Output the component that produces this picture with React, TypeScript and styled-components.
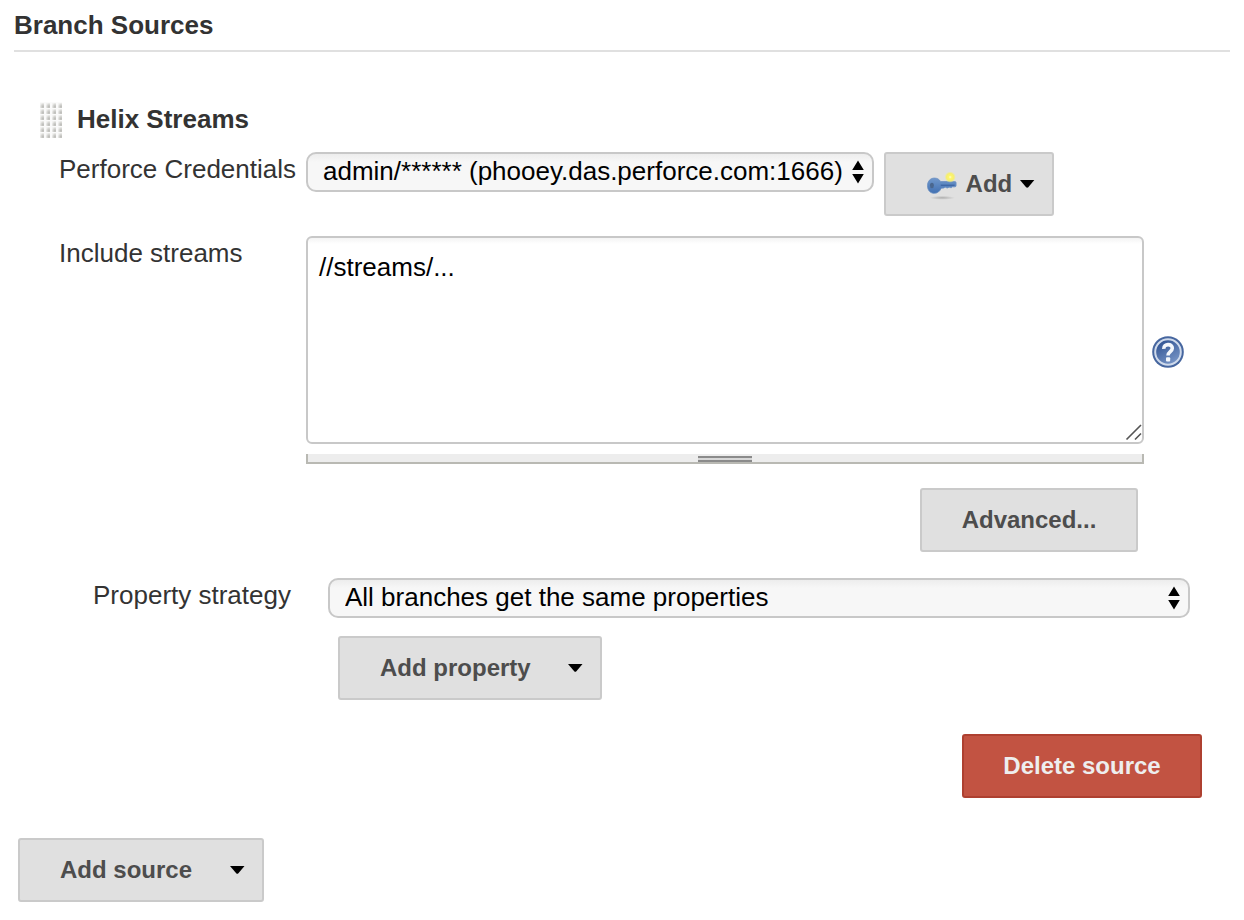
import React from "react";
import styled, { createGlobalStyle } from "styled-components";

const GlobalStyle = createGlobalStyle`
  *, *::before, *::after { box-sizing: border-box; }
  body {
    margin: 0;
    background: #fff;
    color: #333;
    font: 26px/30px "Liberation Sans", Arial, Helvetica, sans-serif;
  }
`;

const Page = styled.main`
  padding: 10px 14px 18px;
`;

const SectionTitle = styled.h1`
  margin: 0;
  padding-bottom: 10px;
  border-bottom: 2px solid #e0e0e0;
  font-size: 26px;
  line-height: 30px;
  font-weight: 700;
`;

const Source = styled.section`
  padding: 50px 28px 0 26px;
`;

const SourceHeader = styled.header`
  display: flex;
  gap: 15px;
  height: 36px;
`;

const SourceTitle = styled.h2`
  margin: 0;
  font-size: 26px;
  line-height: 34px;
  font-weight: 700;
`;

const Row = styled.div<{ $top: number; $left?: number; $right?: number }>`
  display: flex;
  align-items: flex-start;
  margin-top: ${(p) => p.$top}px;
  padding-left: ${(p) => p.$left ?? 0}px;
  padding-right: ${(p) => p.$right ?? 0}px;
`;

const ActionRow = styled(Row)`
  justify-content: flex-end;
`;

const Label = styled.label<{ $width: number }>`
  flex: 0 0 ${(p) => p.$width}px;
  padding-top: 2px;
  white-space: nowrap;
`;

const SelectBox = styled.span<{ $width?: number }>`
  position: relative;
  display: flex;
  flex: ${(p) => (p.$width ? `0 0 ${p.$width}px` : "1")};
`;

const Select = styled.select`
  appearance: none;
  width: 100%;
  height: 40px;
  margin: 0;
  padding: 0 30px 2px 15px;
  border: 2px solid #c8c8c8;
  border-radius: 10px;
  background: linear-gradient(#ededed, #f7f7f7 8px);
  color: #000;
  font: inherit;
`;

const SelectArrows = styled.svg`
  position: absolute;
  top: 8px;
  right: 10px;
  pointer-events: none;
`;

const Button = styled.button<{ $width: number; $danger?: boolean }>`
  display: flex;
  align-items: center;
  justify-content: center;
  width: ${(p) => p.$width}px;
  height: 64px;
  margin: 0;
  padding: 0;
  border: 2px solid ${(p) => (p.$danger ? "#ae4030" : "#cacaca")};
  border-radius: 3px;
  background: ${(p) => (p.$danger ? "#c25342" : "#e0e0e0")};
  color: ${(p) => (p.$danger ? "#eee" : "#4d4d4d")};
  font: inherit;
  font-size: 24px;
  font-weight: 700;
  white-space: nowrap;
`;

const MenuButton = styled(Button)`
  justify-content: space-between;
  padding: 0 17px 0 40px;
`;

const CredentialButton = styled(MenuButton)`
  justify-content: flex-start;
  gap: 8px;
  margin-left: 10px;
`;

const StreamsField = styled.div`
  position: relative;
  flex: 1;
`;

const TextArea = styled.textarea`
  display: block;
  width: 100%;
  height: 208px;
  margin: 0;
  padding: 14px 11px;
  border: 2px solid #c8c8c8;
  border-radius: 6px;
  background: linear-gradient(#f4f4f4, #fff 6px);
  color: #000;
  font: inherit;
  resize: none;
`;

const Corner = styled.svg`
  position: absolute;
  top: 187px;
  right: 0;
  pointer-events: none;
`;

const ResizeBar = styled.div`
  display: flex;
  justify-content: center;
  height: 10px;
  margin-top: 10px;
  padding-top: 2px;
  border: solid #b9b9b3;
  border-width: 0 2px 2px;
  background: #ededed;
`;

const ResizeGrip = styled.span`
  width: 54px;
  height: 6px;
  border: solid #8b8b8b;
  border-width: 2px 0;
  background: #d8d8d8;
`;

const HelpLink = styled.a`
  flex: none;
  align-self: center;
  display: flex;
  height: 32px;
  margin-left: 8px;
`;

const StreamsRow = styled(Row)`
  min-height: 232px;
`;

const Footer = styled.footer`
  margin-top: 40px;
  padding-left: 4px;
`;

const Caret = () => (
  <svg width="15" height="8" viewBox="0 0 15 8" aria-hidden="true">
    <path d="M0 0h14.500L8.400 7.300q-1.100 1-2.200 0z" fill="#000" />
  </svg>
);

const Arrows = () => (
  <SelectArrows width="12" height="24" viewBox="0 0 12 24" aria-hidden="true">
    <path d="M6 .5l5.800 9.500H.2zM.2 14h11.600L6 23.500z" fill="#000" />
  </SelectArrows>
);

const DragHandle = () => (
  <svg width="22" height="36" viewBox="0 0 22 36" aria-hidden="true">
    <defs>
      <radialGradient id="dot" cx=".75" cy=".75" r=".8">
        <stop offset="0" stopColor="#b8b8b4" />
        <stop offset=".5" stopColor="#d2d2cf" />
        <stop offset="1" stopColor="#f3f3f2" />
      </radialGradient>
      <pattern id="dots" width="6" height="6" patternUnits="userSpaceOnUse">
        <rect width="6" height="6" fill="#fafafa" />
        <rect y="1" width="4" height="5" fill="url(#dot)" />
      </pattern>
    </defs>
    <rect width="22" height="36" fill="url(#dots)" />
  </svg>
);

const KeyIcon = () => (
  <svg width="32" height="32" viewBox="0 0 32 32" aria-hidden="true">
    <defs>
      <radialGradient id="glow">
        <stop offset="0" stopColor="#fffccc" />
        <stop offset=".3" stopColor="#fdf56a" />
        <stop offset=".65" stopColor="#f5ee72" />
        <stop offset="1" stopColor="#f3ed8a" stopOpacity="0" />
      </radialGradient>
      <radialGradient id="shade">
        <stop offset="0" stopColor="#999" stopOpacity=".7" />
        <stop offset="1" stopColor="#999" stopOpacity="0" />
      </radialGradient>
      <linearGradient id="metal" x2="0" y2="1">
        <stop offset="0" stopColor="#7198cb" />
        <stop offset="1" stopColor="#4170b2" />
      </linearGradient>
    </defs>
    <ellipse cx="16.500" cy="30" rx="13" ry="2" fill="url(#shade)" />
    <path
      d="M8.500 10c3 0 5 1.200 6.200 3.500H29q1.500 0 1.500 1.200v3q0 1.200-1.500 1.200h-2.200l-1.300 1-2-.7-2 .9-2-.9-1.500.9-2.500.2C14 23.500 11.500 25.500 8.500 25.500 4.500 25.500 1.500 22.500 1.500 17.800S4.500 10 8.500 10z"
      fill="url(#metal)"
      stroke="#6a8fc2"
      strokeWidth=".8"
    />
    <ellipse cx="6" cy="17.500" rx="2" ry="2.800" fill="#4a678f" />
    <path d="M15 17.300h14" stroke="#3f68a6" strokeWidth="1.400" />
    <circle cx="24.500" cy="9" r="5.800" fill="url(#glow)" />
  </svg>
);

const HelpIcon = () => (
  <svg width="32" height="32" viewBox="0 0 32 32" aria-hidden="true">
    <defs>
      <linearGradient id="help" x1=".2" y1="0" x2=".8" y2="1">
        <stop offset="0" stopColor="#2d5090" />
        <stop offset="1" stopColor="#7d9aca" />
      </linearGradient>
    </defs>
    <circle cx="16" cy="16" r="15.800" fill="#46669f" />
    <circle cx="16" cy="16" r="12.800" fill="url(#help)" stroke="#cfdaeb" strokeWidth="2" />
    <path
      d="M11.800 12.800C11.500 7.300 20.500 7.300 20.300 12.300c0 3.200-4.300 3.400-4.300 7.200"
      fill="none"
      stroke="#f4f7fb"
      strokeWidth="3.600"
    />
    <rect x="14" y="21.300" width="4.200" height="4.200" rx="1" fill="#f4f7fb" />
  </svg>
);

export default function App() {
  return (
    <>
      <GlobalStyle />
      <Page>
        <SectionTitle>Branch Sources</SectionTitle>
        <Source>
          <SourceHeader>
            <DragHandle />
            <SourceTitle>Helix Streams</SourceTitle>
          </SourceHeader>

          <Row $top={14} $left={19}>
            <Label $width={247} htmlFor="credentials">Perforce Credentials</Label>
            <SelectBox $width={568}>
              <Select id="credentials">
                <option>admin/****** (phooey.das.perforce.com:1666)</option>
              </Select>
              <Arrows />
            </SelectBox>
            <CredentialButton type="button" $width={170}>
              <KeyIcon />
              Add
              <Caret />
            </CredentialButton>
          </Row>

          <StreamsRow $top={20} $left={19} $right={18}>
            <Label $width={247} htmlFor="streams">Include streams</Label>
            <StreamsField>
              <TextArea id="streams" defaultValue="//streams/..." spellCheck={false} />
              <Corner width="20" height="20" viewBox="0 0 20 20" aria-hidden="true">
                <path d="M2.500 16.500L17 2M11 16.500L17 10.500" stroke="#555" strokeWidth="1.600" />
              </Corner>
              <ResizeBar>
                <ResizeGrip />
              </ResizeBar>
            </StreamsField>
            <HelpLink href="#help" aria-label="Help for Include streams">
              <HelpIcon />
            </HelpLink>
          </StreamsRow>

          <ActionRow $top={20} $right={64}>
            <Button type="button" $width={218}>Advanced...</Button>
          </ActionRow>

          <Row $top={26} $left={53} $right={12}>
            <Label $width={235} htmlFor="strategy">Property strategy</Label>
            <SelectBox>
              <Select id="strategy">
                <option>All branches get the same properties</option>
              </Select>
              <Arrows />
            </SelectBox>
          </Row>

          <Row $top={18} $left={298}>
            <MenuButton type="button" $width={264}>
              Add property
              <Caret />
            </MenuButton>
          </Row>

          <ActionRow $top={34}>
            <Button type="button" $width={240} $danger>Delete source</Button>
          </ActionRow>
        </Source>
        <Footer>
          <MenuButton type="button" $width={246}>
            Add source
            <Caret />
          </MenuButton>
        </Footer>
      </Page>
    </>
  );
}
